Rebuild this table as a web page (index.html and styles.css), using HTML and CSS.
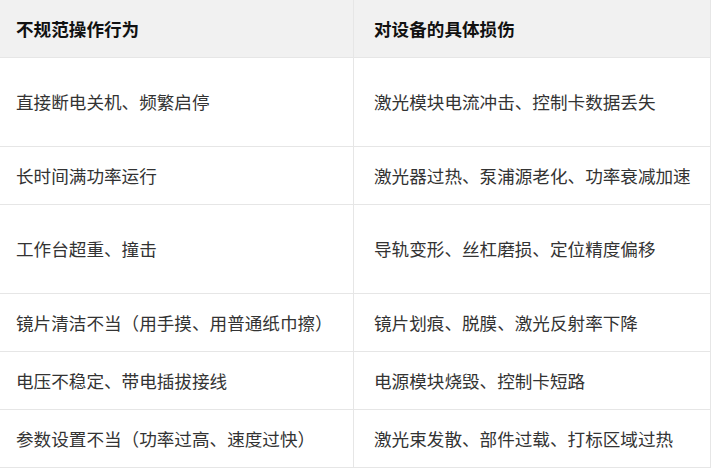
FILE: index.html
```html
<!DOCTYPE html>
<html lang="zh">
<head>
<meta charset="utf-8">
<link rel="stylesheet" href="styles.css">
</head>
<body>
<div class="table">
  <div class="cell head first">不规范操作行为</div>
  <div class="cell head second">对设备的具体损伤</div>

  <div class="cell tall first">直接断电关机、频繁启停</div>
  <div class="cell tall second">激光模块电流冲击、控制卡数据丢失</div>

  <div class="cell first">长时间满功率运行</div>
  <div class="cell second">激光器过热、泵浦源老化、功率衰减加速</div>

  <div class="cell tall first">工作台超重、撞击</div>
  <div class="cell tall second">导轨变形、丝杠磨损、定位精度偏移</div>

  <div class="cell first">镜片清洁不当（用手摸、用普通纸巾擦）</div>
  <div class="cell second">镜片划痕、脱膜、激光反射率下降</div>

  <div class="cell first">电压不稳定、带电插拔接线</div>
  <div class="cell second">电源模块烧毁、控制卡短路</div>

  <div class="cell first">参数设置不当（功率过高、速度过快）</div>
  <div class="cell second">激光束发散、部件过载、打标区域过热</div>
</div>
</body>
</html>
```

FILE: styles.css
```css
html, body {
  margin: 0;
  padding: 0;
  background: #ffffff;
}

body {
  font-family: "Noto Sans CJK SC", "Noto Sans", sans-serif;
  font-size: 17.6px;
  color: #333333;
}

.table {
  display: grid;
  grid-template-columns: 354px 357px;
  width: 711px;
}

.cell {
  box-sizing: border-box;
  height: 58px;
  display: flex;
  align-items: center;
  border-bottom: 1px solid #e6e6e6;
  white-space: nowrap;
  line-height: 1;
}

.cell.tall {
  height: 89px;
}

.cell.first {
  padding-left: 16px;
  border-right: 1px solid #e6e6e6;
}

.cell.second {
  padding-left: 20px;
  border-right: 1px solid #e6e6e6;
}

.cell.head {
  background: #f1f1f1;
  color: #111111;
  font-weight: 700;
}
```
